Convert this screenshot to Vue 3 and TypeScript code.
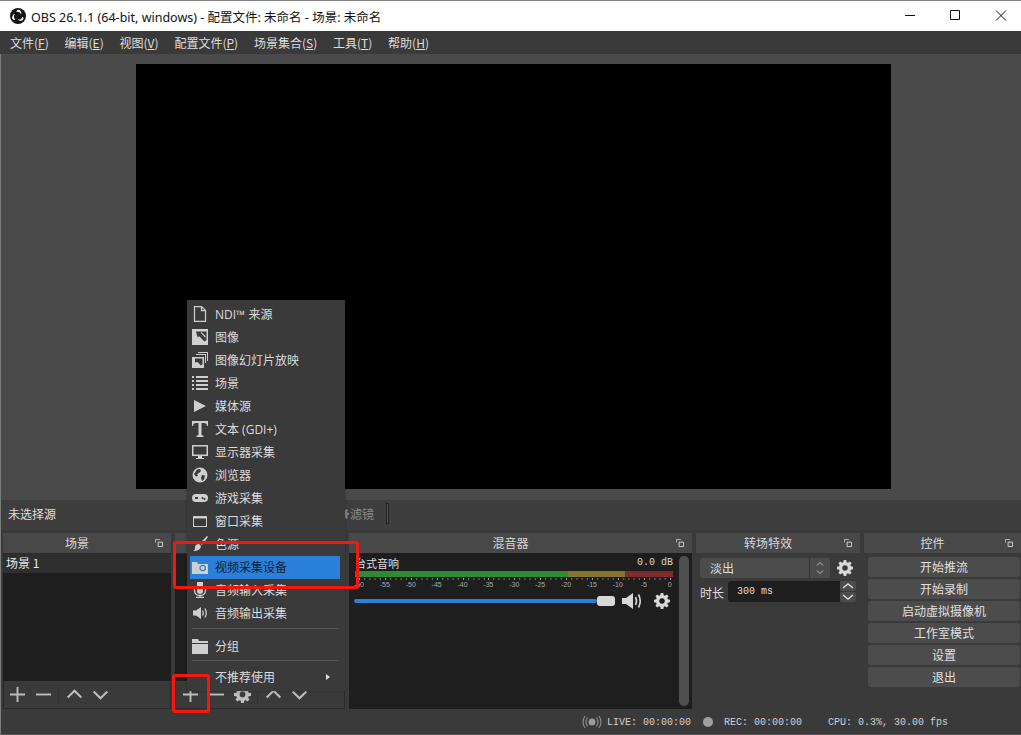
<script setup lang="ts">
type MenuEntry = { label: string; icon?: string; active?: boolean; arrow?: boolean; sep?: boolean }

const menus = [
  ['文件', 'F'],
  ['编辑', 'E'],
  ['视图', 'V'],
  ['配置文件', 'P'],
  ['场景集合', 'S'],
  ['工具', 'T'],
  ['帮助', 'H'],
]

const icons: Record<string, string> = {
  file: '<path fill="none" stroke="currentColor" stroke-width="1.2" d="M2.500 .600h7l4 4V15.400h-11zM9.500 .600v4h4"/>',
  image: '<path fill="currentColor" d="M0 0h16v16H0z"/><path fill="#3a3a3a" d="M4 2.500h10.500v8.500l-2 1.500-5-5-2 .5z"/><path fill="currentColor" d="M8.500 3.500l1.500 0 3.500 3.500v2z"/>',
  slides: '<path fill="currentColor" d="M6 0h10v9h-1V1H6zM4 2h10v9h-1V3H4z"/><path fill="currentColor" d="M0 5h12v11H0z"/><path fill="#3a3a3a" d="M3 6.500h7.500v5.500l-1.500 1.500-3.500-3.500-2.500.5z"/>',
  list: '<path fill="currentColor" d="M0 1h2v2H0zM4 1h12v2H4zM0 5h2v2H0zM4 5h12v2H4zM0 9h2v2H0zM4 9h12v2H4zM0 13h2v2H0zM4 13h12v2H4z"/>',
  play: '<path fill="currentColor" d="M2 2l12 6-12 6z"/>',
  text: '<path fill="currentColor" d="M0 0h16v5h-1c-.3-2-1-3-3-3H9.500v12l2 .7V16h-7v-1.300l2-.7V2H4C2 2 1.300 3 1 5H0z"/>',
  monitor: '<path fill="currentColor" fill-rule="evenodd" d="M0 1h16v11H0zM1.500 2.500v8h13v-8zM6 12h4v2h2v1H4v-1h2z"/>',
  globe: '<circle cx="8" cy="8" r="7.500" fill="currentColor"/><path fill="#3a3a3a" d="M5 2.500l3-.5 1 2-2 2-2 1 1 2-2 .5L2 7zM10 8l3 .5-1 4-2 1.500-1-3z"/>',
  gamepad: '<path fill="currentColor" fill-rule="evenodd" d="M4 4h8a4 4 0 0 1 0 8H4a4 4 0 0 1 0-8zM3 7v2h3V7zM10.500 7a1 1 0 1 0 .01 0zM12.500 8a1 1 0 1 0 .01 0z"/>',
  window: '<path fill="currentColor" fill-rule="evenodd" d="M1 3h14v11H1zM2 5.500V13h12V5.500z"/>',
  brush: '<path fill="currentColor" d="M15 0l1 1-6 8-2-2zM7 8l2 2c0 3-3 5-8 5 2-1 2-2 2-4 0-2 2-3 4-3z"/>',
  camera: '<path fill="currentColor" fill-rule="evenodd" d="M0 3h5l1 2h10v10H0zM10.700 5.700a3.300 3.300 0 1 0 .01 0zM10.700 6.900a2.100 2.100 0 1 1-.01 0z"/>',
  mic: '<path fill="currentColor" d="M5 0h6v9a3 3 0 0 1-6 0z"/><path fill="none" stroke="currentColor" stroke-width="1.300" d="M2.500 7v2a5.500 4.500 0 0 0 11 0V7M8 13.500V16M4 15.500h8"/>',
  speaker: '<path fill="currentColor" d="M1 5.500h3l5-3.500v12l-5-3.500H1z"/><path fill="none" stroke="currentColor" stroke-width="1.300" d="M10.500 5.500q1.500 2.500 0 5M13 3.500q2.500 4.500 0 9"/>',
  folder: '<path fill="currentColor" d="M0 1h6l1 2h9v2H0zM0 6h16v10H0z"/>',
}

const entries: MenuEntry[] = [
  { label: 'NDI™ 来源', icon: 'file' },
  { label: '图像', icon: 'image' },
  { label: '图像幻灯片放映', icon: 'slides' },
  { label: '场景', icon: 'list' },
  { label: '媒体源', icon: 'play' },
  { label: '文本 (GDI+)', icon: 'text' },
  { label: '显示器采集', icon: 'monitor' },
  { label: '浏览器', icon: 'globe' },
  { label: '游戏采集', icon: 'gamepad' },
  { label: '窗口采集', icon: 'window' },
  { label: '色源', icon: 'brush' },
  { label: '视频采集设备', icon: 'camera', active: true },
  { label: '音频输入采集', icon: 'mic' },
  { label: '音频输出采集', icon: 'speaker' },
  { label: '', sep: true },
  { label: '分组', icon: 'folder' },
  { label: '', sep: true },
  { label: '不推荐使用', arrow: true },
]

const ticks = [-60, -55, -50, -45, -40, -35, -30, -25, -20, -15, -10, -5, 0]
const controls = ['开始推流', '开始录制', '启动虚拟摄像机', '工作室模式', '设置', '退出']

const gear =
  'M6.700 0h2.600l.4 2.200 1.300.5 1.800-1.300 1.800 1.800-1.300 1.800.5 1.300 2.200.4v2.600l-2.200.4-.5 1.300 1.300 1.800-1.800 1.800-1.800-1.300-1.300.5-.4 2.200H6.700l-.4-2.200-1.300-.5-1.800 1.300-1.800-1.800 1.300-1.800-.5-1.300L0 9.300V6.700l2.200-.4.5-1.300-1.300-1.800 1.800-1.800 1.800 1.300 1.300-.5zM8 5.200a2.800 2.800 0 1 0 .01 0z'
const blade = 'M7.500 1.800a3.300 3.300 0 0 1 3.600 4.600 3.900 3.900 0 0 0-4.700-2.500 3 3 0 0 1 1.100-2.100z'
</script>

<template>
  <div class="win">
    <header class="titlebar">
      <svg class="logo" viewBox="0 0 16 16">
        <circle cx="8" cy="8" r="8" fill="#151515" />
        <path :d="blade" fill="#fff" />
        <path :d="blade" fill="#fff" transform="rotate(120 8 8)" />
        <path :d="blade" fill="#fff" transform="rotate(240 8 8)" />
      </svg>
      <span class="title">OBS 26.1.1 (64-bit, windows) - 配置文件: 未命名 - 场景: 未命名</span>
      <div class="winbtns">
        <svg viewBox="0 0 46 30"><path d="M22 14.500h10" stroke="#111" fill="none" /></svg>
        <svg viewBox="0 0 46 30"><path d="M21.500 9.500h9v9h-9z" stroke="#111" fill="none" /></svg>
        <svg viewBox="0 0 46 30"><path d="M21 9.500l10 10M31 9.500l-10 10" stroke="#111" fill="none" /></svg>
      </div>
    </header>

    <nav class="menubar">
      <span v-for="m in menus" :key="m[1]" class="menu-item">{{ m[0] }}(<u>{{ m[1] }}</u>)</span>
    </nav>

    <main class="preview-wrap">
      <div class="preview"></div>
    </main>

    <div class="context">
      <span class="context-label">未选择源</span>
      <svg class="filter-ic" viewBox="0 0 16 16"><path fill="#858585" fill-rule="evenodd" :d="gear" /></svg>
      <span class="filter-btn">滤镜</span>
      <i class="context-sep"></i>
    </div>

    <section class="docks">
      <div class="dock scenes">
        <div class="dock-title">
          <span class="dock-name">场景</span>
          <svg class="float" viewBox="0 0 9 9"><path d="M.500 4V.500h5" fill="none" stroke="#c8c8c8" /><path d="M3.500 3.500h5v5h-5z" fill="none" stroke="#e0e0e0" /></svg>
        </div>
        <div class="list-box">
          <div class="scene-row">场景 1</div>
        </div>
        <div class="toolbar">
          <svg viewBox="0 0 18 18"><path d="M1 8h16v2H1zM8 1h2v16H8z" /></svg>
          <svg viewBox="0 0 18 18"><path d="M1 8h16v2H1z" /></svg>
          <i class="tool-sep"></i>
          <svg viewBox="0 0 18 18"><path d="M9 3.500l8 8-1.500 1.500L9 6.500 2.500 13 1 11.500z" /></svg>
          <svg viewBox="0 0 18 18"><path d="M9 14.500l8-8L15.500 5 9 11.500 2.500 5 1 6.500z" /></svg>
        </div>
      </div>

      <div class="dock sources">
        <div class="dock-title">
          <span class="dock-name">来源</span>
          <svg class="float" viewBox="0 0 9 9"><path d="M.500 4V.500h5" fill="none" stroke="#c8c8c8" /><path d="M3.500 3.500h5v5h-5z" fill="none" stroke="#e0e0e0" /></svg>
        </div>
        <div class="list-box"></div>
        <div class="toolbar">
          <svg viewBox="0 0 18 18"><path d="M1 8h16v2H1zM8 1h2v16H8z" /></svg>
          <svg viewBox="0 0 18 18"><path d="M1 8h16v2H1z" /></svg>
          <svg viewBox="0 0 16 16"><path fill-rule="evenodd" :d="gear" /></svg>
          <i class="tool-sep"></i>
          <svg viewBox="0 0 18 18"><path d="M9 3.500l8 8-1.500 1.500L9 6.500 2.500 13 1 11.500z" /></svg>
          <svg viewBox="0 0 18 18"><path d="M9 14.500l8-8L15.500 5 9 11.500 2.500 5 1 6.500z" /></svg>
        </div>
      </div>

      <div class="dock mixer">
        <div class="dock-title">
          <span class="dock-name">混音器</span>
          <svg class="float" viewBox="0 0 9 9"><path d="M.500 4V.500h5" fill="none" stroke="#c8c8c8" /><path d="M3.500 3.500h5v5h-5z" fill="none" stroke="#e0e0e0" /></svg>
        </div>
        <div class="mixer-body">
          <div class="channel">
            <div class="channel-head"><span>台式音响</span><span class="db">0.0 dB</span></div>
            <div class="meter"><i class="m-green"></i><i class="m-yellow"></i><i class="m-red"></i></div>
            <div class="scale"><span v-for="t in ticks" :key="t">{{ t }}</span></div>
            <div class="volume">
              <div class="slider"><i class="knob"></i></div>
              <svg class="vol-ic" viewBox="0 0 22 18"><path d="M0 6h4l7-5v16l-7-5H0z" fill="#d8d8d8" /><path d="M13.500 5q2 4 0 8M16.500 2.500q3.500 6.500 0 13" fill="none" stroke="#d8d8d8" stroke-width="1.600" /></svg>
              <svg class="gear-ic" viewBox="0 0 16 16"><path fill="#d8d8d8" fill-rule="evenodd" :d="gear" /></svg>
            </div>
          </div>
          <div class="scrollbar"><i></i></div>
        </div>
      </div>

      <div class="dock transitions">
        <div class="dock-title">
          <span class="dock-name">转场特效</span>
          <svg class="float" viewBox="0 0 9 9"><path d="M.500 4V.500h5" fill="none" stroke="#c8c8c8" /><path d="M3.500 3.500h5v5h-5z" fill="none" stroke="#e0e0e0" /></svg>
        </div>
        <div class="trans-body">
          <div class="trans-row">
            <div class="combo">
              <span class="combo-text">淡出</span>
              <span class="combo-arrows"><svg viewBox="0 0 8 14"><path d="M1 4.500l3-3 3 3M1 9.500l3 3 3-3" fill="none" stroke="#bbb" /></svg></span>
            </div>
            <svg class="gear-ic" viewBox="0 0 16 16"><path fill="#d8d8d8" fill-rule="evenodd" :d="gear" /></svg>
          </div>
          <div class="trans-row dur">
            <span class="dur-label">时长</span>
            <span class="spin"><span>300 ms</span></span>
            <span class="spin-btns">
              <svg viewBox="0 0 16 10"><path d="M3 7l5-4 5 4" fill="none" stroke="#ddd" stroke-width="1.500" /></svg>
              <svg viewBox="0 0 16 10"><path d="M3 3l5 4 5-4" fill="none" stroke="#ddd" stroke-width="1.500" /></svg>
            </span>
          </div>
        </div>
      </div>

      <div class="dock controls">
        <div class="dock-title">
          <span class="dock-name">控件</span>
          <svg class="float" viewBox="0 0 9 9"><path d="M.500 4V.500h5" fill="none" stroke="#c8c8c8" /><path d="M3.500 3.500h5v5h-5z" fill="none" stroke="#e0e0e0" /></svg>
        </div>
        <div class="ctrl-body">
          <button v-for="c in controls" :key="c" class="ctrl-btn">{{ c }}</button>
        </div>
      </div>
    </section>

    <footer class="statusbar">
      <svg class="live-ic" viewBox="0 0 20 14"><circle cx="10" cy="7" r="3.500" fill="#999" /><path d="M5.500 2.500q-3 4.500 0 9M14.500 2.500q3 4.500 0 9M3 1q-4 6 0 12M17 1q4 6 0 12" fill="none" stroke="#888" stroke-width="1.200" /></svg>
      <span class="st-live">LIVE: 00:00:00</span>
      <i class="rec-dot"></i>
      <span class="st-rec">REC: 00:00:00</span>
      <span class="st-cpu">CPU: 0.3%, 30.00 fps</span>
    </footer>

    <!-- add source popup, over the docks -->
    <div class="popup">
      <template v-for="(e, i) in entries" :key="i">
        <div v-if="e.sep" class="popup-sep"></div>
        <div v-else class="popup-row" :class="{ active: e.active }">
          <svg v-if="e.icon" class="popup-ic" viewBox="0 0 16 16" v-html="icons[e.icon]"></svg>
          <span class="popup-label">{{ e.label }}</span>
          <i v-if="e.arrow" class="popup-arrow"></i>
        </div>
      </template>
    </div>

    <!-- red annotation boxes drawn on the screenshot -->
    <div class="mark mark-row"></div>
    <div class="mark mark-plus"></div>
  </div>
</template>

<style scoped>
.win {
  position: relative;
  width: 1021px;
  height: 735px;
  display: flex;
  flex-direction: column;
  overflow: hidden;
  background: #3a3a3a;
  font-family: "Noto Sans CJK SC", "Liberation Sans", sans-serif;
  font-size: 12px;
  color: #dedede;
  box-shadow: inset 1px 0 0 #7d7d7d;
}

.titlebar {
  height: 31px;
  flex: none;
  display: flex;
  align-items: center;
  background: #fff;
  border-top: 1px solid #808080;
  box-sizing: border-box;
  padding-left: 10px;
  color: #111;
  font-size: 12.5px;
}
.logo {
  width: 16px;
  height: 16px;
  margin-right: 5px;
}
.title {
  font-family: "Noto Sans", "Noto Sans CJK SC", sans-serif;
  white-space: nowrap;
}
.winbtns {
  margin-left: auto;
  display: flex;
}
.winbtns svg {
  width: 46px;
  height: 30px;
}

.menubar {
  height: 23px;
  flex: none;
  display: flex;
  align-items: center;
  background: #3a3a3a;
  padding-left: 10px;
  gap: 15.8px;
}
.menu-item {
  white-space: nowrap;
}

.preview-wrap {
  height: 446px;
  flex: none;
  box-sizing: border-box;
  background: #4a4a4a;
  margin-left: 1px;
  padding: 10px 130px 11px 135px;
  display: flex;
}
.preview {
  flex: 1;
  background: #000;
}

.context {
  height: 30px;
  flex: none;
  box-sizing: border-box;
  display: flex;
  align-items: center;
  margin-left: 1px;
  padding: 0 0 3px 7px;
  font-size: 12px;
  background: #3e3e3e;
}
.filter-ic {
  width: 12px;
  height: 12px;
  margin-left: 281px;
}
.filter-btn {
  margin-left: 1px;
  color: #8a8a8a;
}
.context-sep {
  width: 3px;
  height: 21px;
  margin-left: 12px;
  box-sizing: border-box;
  border: 1px solid #222;
  background: #555;
}

.docks {
  height: 176px;
  flex: none;
  display: flex;
  gap: 4px;
  margin-top: 3px;
  padding-left: 3px;
}
.dock {
  display: flex;
  flex-direction: column;
  background: #3a3a3a;
}
.scenes {
  width: 168px;
}
.sources {
  width: 170px;
}
.mixer {
  width: 343px;
}
.transitions {
  width: 164px;
}
.controls {
  width: 157px;
}
.dock-title {
  position: relative;
  height: 20px;
  flex: none;
  box-sizing: border-box;
  padding-right: 20px;
  background: #484848;
  text-align: center;
  line-height: 20px;
  color: #d8d8d8;
}
.float {
  position: absolute;
  right: 8px;
  top: 6px;
  width: 8px;
  height: 8px;
}

.list-box {
  flex: 1;
  background: #1e1e1e;
  border-top: 1px solid #2a2a2a;
}
.scene-row {
  height: 19px;
  line-height: 17px;
  padding-left: 3px;
  background: #2f2f2f;
  color: #e8e8e8;
}
.toolbar {
  height: 28px;
  flex: none;
  display: flex;
  align-items: center;
  gap: 9px;
  padding-left: 5px;
  border: 1px solid #2a2a2a;
  border-top: 0;
  background: #3a3a3a;
  box-sizing: border-box;
}
.sources .toolbar {
  padding-left: 6px;
}
.toolbar svg {
  width: 17px;
  height: 17px;
  fill: #bdbdbd;
}
.tool-sep {
  width: 1px;
  height: 18px;
  background: #333;
  margin: 0 -2px 0 -3px;
}

.mixer-body {
  flex: 1;
  display: flex;
  background: #1e1e1e;
  padding-left: 5px;
}
.channel {
  flex: 1;
  min-width: 0;
  padding-top: 3px;
}
.channel-head {
  display: flex;
  justify-content: space-between;
  height: 14px;
  line-height: 14px;
  font-size: 11px;
  padding-right: 6px;
  padding-left: 1px;
}
.db {
  color: #d8d8d8;
  font-family: "Liberation Mono", monospace;
  font-size: 10px;
  white-space: pre;
}
.meter {
  display: flex;
  height: 7px;
  margin: 1px 6px 0 1px;
  background: #1e1e1e;
}
.meter i {
  height: 7px;
  /* two stereo bars sharing one colour */
  box-shadow: inset 0 -4px 0 -3px #1e1e1e;
}
.m-green {
  width: 213px;
  background: #2f8a34;
}
.m-yellow {
  width: 57px;
  background: #84762c;
}
.m-red {
  width: 48px;
  background: #7f2c2c;
}
.scale {
  display: flex;
  margin: 0 0 0 -8px;
  height: 13px;
  line-height: 12px;
  font-family: "Liberation Sans", sans-serif;
  font-size: 7px;
  color: #aaa;
}
.scale span {
  position: relative;
  width: 25.900px;
  padding-top: 1px;
  flex: none;
  text-align: center;
}
.scale span::before {
  content: "";
  position: absolute;
  left: 50%;
  top: 0;
  width: 1px;
  height: 2px;
  background: #999;
  box-shadow: 5.200px 0 #777, 10.400px 0 #777, 15.600px 0 #777, 20.800px 0 #777;
}
.scale span:last-child::before {
  box-shadow: none;
}
.volume {
  display: flex;
  align-items: center;
  height: 18px;
  margin-top: 1px;
}
.slider {
  position: relative;
  width: 243px;
  height: 4px;
  flex: none;
  border-radius: 2px;
  background: #2a7fd8;
}
.knob {
  position: absolute;
  right: -18px;
  top: -3px;
  width: 18px;
  height: 10px;
  border-radius: 3px;
  background: #d8d8d8;
}
.vol-ic {
  width: 22px;
  height: 18px;
  flex: none;
  margin-left: 25px;
}
.gear-ic {
  width: 16px;
  height: 16px;
  flex: none;
  margin-left: 10px;
}
.scrollbar {
  width: 10px;
  flex: none;
  margin: 3px 3px 3px 0;
}
.scrollbar i {
  display: block;
  height: 100%;
  border-radius: 5px;
  background: #4f4f4f;
}

.trans-body {
  padding: 5px 4px;
}
.trans-row {
  display: flex;
  align-items: center;
}
.combo {
  width: 130px;
  height: 20px;
  display: flex;
  background: #4c4c4c;
  border-radius: 3px;
}
.combo-text {
  flex: 1;
  line-height: 20px;
  padding-left: 10px;
  border-right: 1px solid #333;
}
.combo-arrows {
  width: 20px;
  display: flex;
  align-items: center;
  justify-content: center;
}
.combo-arrows svg {
  width: 8px;
  height: 14px;
}
.trans-row .gear-ic {
  margin-left: 7px;
}
.dur {
  margin-top: 3px;
}
.dur-label {
  width: 28px;
  padding-top: 1px;
}
.spin {
  width: 112px;
  height: 21px;
  line-height: 22px;
  background: #1e1e1e;
  border-radius: 3px 0 0 3px;
  padding-left: 9px;
  box-sizing: border-box;
  font-family: "Liberation Mono", monospace;
  font-size: 10px;
}
.spin-btns {
  display: flex;
  flex-direction: column;
  gap: 1px;
}
.spin-btns svg {
  display: block;
  width: 16px;
  height: 10px;
  background: #4c4c4c;
  border-radius: 2px;
}

.ctrl-body {
  display: flex;
  flex-direction: column;
  gap: 2px;
  padding: 4px 1px 0 4px;
}
.ctrl-btn {
  height: 20px;
  padding: 0;
  border: 0;
  border-radius: 3px;
  background: #4c4c4c;
  color: #e0e0e0;
  font: inherit;
  line-height: 20px;
}

.statusbar {
  height: 26px;
  flex: none;
  box-sizing: border-box;
  display: flex;
  align-items: center;
  font-family: "Liberation Mono", monospace;
  font-size: 10px;
  color: #d0d0d0;
  padding: 1px 0 0 582px;
  white-space: pre;
  border-bottom: 1px solid #555;
}
.live-ic {
  width: 20px;
  height: 14px;
}
.st-live {
  margin-left: 5px;
}
.rec-dot {
  width: 10px;
  height: 10px;
  margin-left: 12px;
  border-radius: 50%;
  background: #a0a0a0;
}
.st-rec {
  margin-left: 11px;
}
.st-cpu {
  margin-left: 26px;
}

.popup {
  position: absolute;
  left: 187px;
  top: 300px;
  width: 158px;
  height: 391px;
  box-sizing: border-box;
  padding: 3px 5px 2px 3px;
  background: #3a3a3a;
  box-shadow: 0 0 3px rgba(0, 0, 0, 0.3);
  font-family: "Open Sans", "Noto Sans CJK SC", sans-serif;
}
.popup-row {
  position: relative;
  height: 23px;
  display: flex;
  align-items: center;
  padding-left: 25px;
  color: #dcdcdc;
}
.popup-label {
  margin-top: -2px;
}
.popup-row.active {
  background: #2a7fd8;
  color: #14202c;
}
.popup-ic {
  position: absolute;
  left: 2px;
  top: 3px;
  width: 16px;
  height: 16px;
  color: #cfcfcf;
}
.popup-sep {
  height: 1px;
  margin: 3px 2px 6px;
  background: #555;
}
.popup-row + .popup-sep + .popup-row + .popup-sep {
  margin-top: 2px;
  margin-bottom: 5px;
}
.popup-arrow {
  position: absolute;
  right: 10px;
  top: 8px;
  border-left: 4px solid #ddd;
  border-top: 3.500px solid transparent;
  border-bottom: 3.500px solid transparent;
}

.mark {
  position: absolute;
  box-sizing: border-box;
  border: 3px solid #f5170d;
  border-radius: 3px;
}
.mark-row {
  left: 173px;
  top: 541px;
  width: 186px;
  height: 48px;
}
.mark-plus {
  left: 172px;
  top: 674px;
  width: 38px;
  height: 39px;
}
</style>
